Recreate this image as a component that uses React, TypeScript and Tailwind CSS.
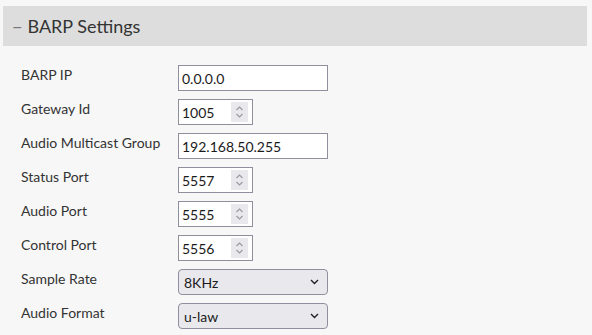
import React from 'react';

const font = { fontFamily: '"Lato", "Liberation Sans", sans-serif' };

const Spinner: React.FC = () => (
    <div className="flex flex-col items-center justify-center w-[17px] h-[20px] bg-[#e9e9ed] mr-[4px]">
        <svg width="9" height="16" viewBox="0 0 9 16" fill="none" stroke="#9a9aa6" strokeWidth="1.2">
            <path d="M1.5 6 L4.5 3 L7.5 6" />
            <path d="M1.5 10 L4.5 13 L7.5 10" />
        </svg>
    </div>
);

const TextBox: React.FC<{ value: string }> = ({ value }) => (
    <div className="w-[150px] h-[26px] border border-[#8f8f9d] bg-white flex items-center px-[3px] text-[14px] text-[#1b1b1b]">
        {value}
    </div>
);

const NumberBox: React.FC<{ value: string }> = ({ value }) => (
    <div className="w-[75px] h-[26px] border border-[#8f8f9d] bg-white flex items-center justify-between pl-[3px] text-[14px] text-[#1b1b1b]">
        <span>{value}</span>
        <Spinner />
    </div>
);

const SelectBox: React.FC<{ value: string }> = ({ value }) => (
    <div className="w-[150px] h-[26px] border border-[#8f8f9d] rounded-[4px] bg-[#e9e9ed] flex items-center justify-between pl-[5px] pr-[8px] text-[14px] text-[#1b1b1b]">
        <span>{value}</span>
        <svg width="9" height="6" viewBox="0 0 9 6" fill="none" stroke="#222" strokeWidth="1.4">
            <path d="M1 1 L4.5 4.5 L8 1" />
        </svg>
    </div>
);

const rows: { label: string; field: React.ReactNode }[] = [
    { label: 'BARP IP', field: <TextBox value="0.0.0.0" /> },
    { label: 'Gateway Id', field: <NumberBox value="1005" /> },
    { label: 'Audio Multicast Group', field: <TextBox value="192.168.50.255" /> },
    { label: 'Status Port', field: <NumberBox value="5557" /> },
    { label: 'Audio Port', field: <NumberBox value="5555" /> },
    { label: 'Control Port', field: <NumberBox value="5556" /> },
    { label: 'Sample Rate', field: <SelectBox value="8KHz" /> },
    { label: 'Audio Format', field: <SelectBox value="u-law" /> },
];

export default function App() {
    return (
        <div className="w-[592px] h-[335px] bg-[#f7f7f7] overflow-hidden pt-[6px] pl-[3px] pr-[5px]" style={font}>
            <div className="h-[40px] bg-[#dddddd] flex items-center pl-[9px] text-[18px] text-[#333]">
                <span className="text-[#777] mr-[5px]">−</span>
                <span>BARP Settings</span>
            </div>
            <div className="pt-[19px] pl-[18px] flex flex-col gap-[8px]">
                {rows.map((r) => (
                    <div key={r.label} className="flex items-start h-[26px]">
                        <div className="w-[157px] text-[14px] text-[#333] leading-[20px]">{r.label}</div>
                        {r.field}
                    </div>
                ))}
            </div>
        </div>
    );
}
